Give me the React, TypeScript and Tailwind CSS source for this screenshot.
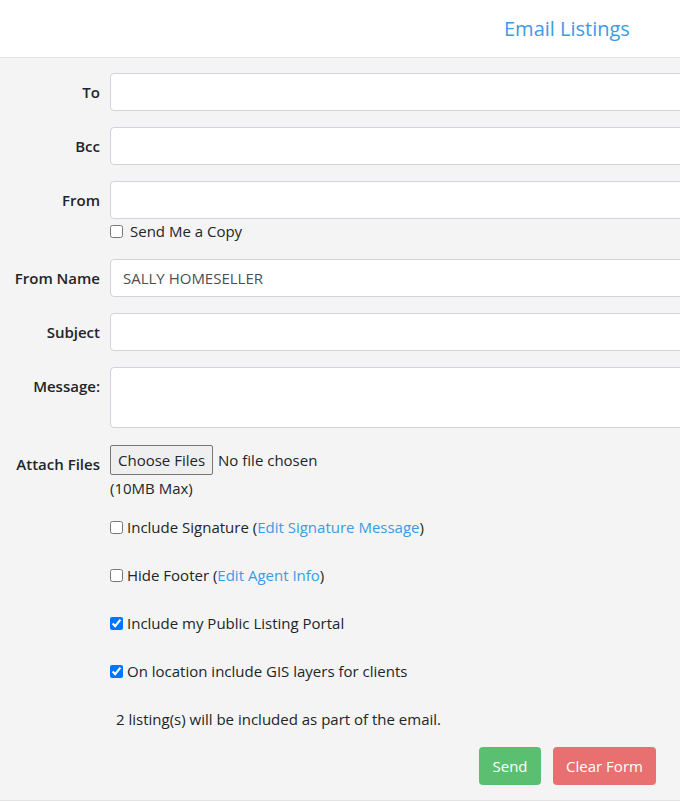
import React from "react";

const font = { fontFamily: '"Open Sans", "Noto Sans", sans-serif' };

function Row({ label, children, className = "" }: { label: string; children: React.ReactNode; className?: string }) {
  return (
    <div className={`flex ${className}`}>
      <div className="w-[110px] shrink-0 pr-[10px] pt-[7px] text-right text-[15px] leading-[24px] font-semibold text-[#212529]">{label}</div>
      <div className="flex-1">{children}</div>
    </div>
  );
}

function Input({ value = "" }: { value?: string }) {
  return (
    <div className="h-[38px] w-[620px] rounded-[4px] border border-[#ced4da] bg-white px-[12px] text-[15px] leading-[36px] text-[#495057]">{value}</div>
  );
}

function Check({ checked, children }: { checked?: boolean; children: React.ReactNode }) {
  return (
    <div className="flex h-[48px] items-center text-[15px] text-[#212529]">
      <input type="checkbox" defaultChecked={checked} className="m-0 mr-[4px] h-[13px] w-[13px] accent-[#0075ff]" />
      <span>{children}</span>
    </div>
  );
}

export default function App() {
  return (
    <div className="h-[802px] w-[680px] overflow-hidden bg-white" style={font}>
      <div className="flex h-[58px] items-center border-b border-[#e3e3e3] bg-white">
        <div className="ml-[504px] text-[20px] text-[#3a9be6]">Email Listings</div>
      </div>
      <div className="h-[743px] border-b border-[#e3e3e3] bg-[#f4f4f4] pt-[15px]">
        <Row label="To"><Input /></Row>
        <Row label="Bcc" className="mt-[16px]"><Input /></Row>
        <Row label="From" className="mt-[16px]">
          <Input />
          <div className="flex h-[24px] items-center text-[15px] text-[#212529]">
            <input type="checkbox" className="m-0 mr-[7px] h-[13px] w-[13px]" />
            <span>Send Me a Copy</span>
          </div>
        </Row>
        <Row label="From Name" className="mt-[16px]"><Input value="SALLY HOMESELLER" /></Row>
        <Row label="Subject" className="mt-[16px]"><Input /></Row>
        <Row label="Message:" className="mt-[16px]">
          <div className="h-[61px] w-[620px] rounded-[4px] border border-[#ced4da] bg-white" />
        </Row>
        <Row label="Attach Files" className="mt-[17px]">
          <div className="flex items-center text-[15px] text-[#212529]">
            <button className="h-[30px] rounded-[2px] border border-[#767676] bg-[#efefef] px-[7px] text-[15px] text-[#212529]">Choose Files</button>
            <span className="ml-[5px]">No file chosen</span>
          </div>
          <div className="mt-[1px] text-[15px] leading-[24px] text-[#212529]">(10MB Max)</div>
          <div className="mt-[3px]">
            <Check>Include Signature (<span className="text-[#3a9be6]">Edit Signature Message</span>)</Check>
            <Check>Hide Footer (<span className="text-[#3a9be6]">Edit Agent Info</span>)</Check>
            <Check checked>Include my Public Listing Portal</Check>
            <Check checked>On location include GIS layers for clients</Check>
            <div className="flex h-[48px] items-center pl-[6px] text-[15px] text-[#212529]">2 listing(s) will be included as part of the email.</div>
          </div>
        </Row>
        <div className="mt-[4px] flex">
          <button className="ml-[479px] h-[38px] w-[62px] rounded-[4px] bg-[#5bbf72] text-[15px] text-white">Send</button>
          <button className="ml-[12px] h-[38px] w-[103px] rounded-[4px] bg-[#e87070] text-[15px] text-white">Clear Form</button>
        </div>
      </div>
    </div>
  );
}
